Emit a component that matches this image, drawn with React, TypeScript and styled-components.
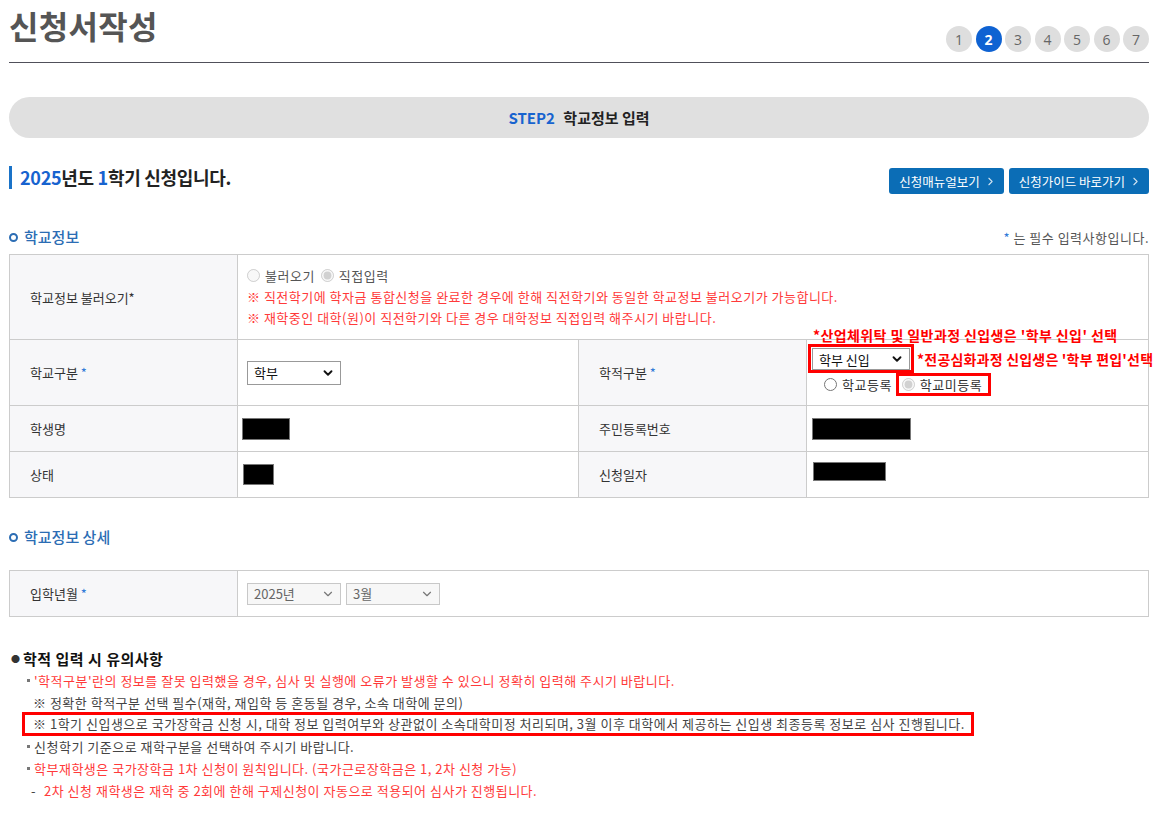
import styled, { createGlobalStyle } from "styled-components";
import { ChevronDown, ChevronRight } from "lucide-react";

const GlobalStyle = createGlobalStyle`
  body {
    margin: 0;
    background: #fff;
    font-family: "Noto Sans CJK KR", "Noto Sans", sans-serif;
    color: #333;
  }
`;

const STEPS = [1, 2, 3, 4, 5, 6, 7];

export default function App() {
  return (
    <>
      <GlobalStyle />
      <Page>
        <Header>
          <PageTitle>신청서작성</PageTitle>
          <Steps>
            {STEPS.map((n) => (
              <StepDot key={n} $active={n === 2}>
                {n}
              </StepDot>
            ))}
          </Steps>
        </Header>

        <StepBar>
          <Blue>STEP2</Blue> 학교정보 입력
        </StepBar>

        <YearRow>
          <YearTitle>
            <Blue>2025</Blue>년도 <Blue>1</Blue>학기 신청입니다.
          </YearTitle>
          <ButtonGroup>
            <LinkButton>
              신청매뉴얼보기 <ChevronRight size={13} strokeWidth={2} />
            </LinkButton>
            <LinkButton>
              신청가이드 바로가기 <ChevronRight size={13} strokeWidth={2} />
            </LinkButton>
          </ButtonGroup>
        </YearRow>

        <SectionHead>
          <SectionTitle>
            <Ring />
            학교정보
          </SectionTitle>
          <RequiredNote>
            <Star>*</Star> 는 필수 입력사항입니다.
          </RequiredNote>
        </SectionHead>

        <InfoTable>
          <colgroup>
            <col style={{ width: 228 }} />
            <col style={{ width: 341 }} />
            <col style={{ width: 228 }} />
            <col />
          </colgroup>
          <tbody>
            <Row $h={85}>
              <Label>학교정보 불러오기*</Label>
              <Value colSpan={3} $top>
                <Line>
                  <RadioLabel>
                    <input type="radio" name="load" disabled /> 불러오기
                  </RadioLabel>
                  <RadioLabel>
                    <input type="radio" name="load" disabled defaultChecked /> 직접입력
                  </RadioLabel>
                </Line>
                <Line $red>※ 직전학기에 학자금 통합신청을 완료한 경우에 한해 직전학기와 동일한 학교정보 불러오기가 가능합니다.</Line>
                <Line $red>※ 재학중인 대학(원)이 직전학기와 다른 경우 대학정보 직접입력 해주시기 바랍니다.</Line>
              </Value>
            </Row>
            <Row $h={66}>
              <Label>
                학교구분 <Star>*</Star>
              </Label>
              <Value>
                <Select $w={94}>
                  <select defaultValue="학부">
                    <option>학부</option>
                  </select>
                  <ChevronDown size={14} strokeWidth={3.2} />
                </Select>
              </Value>
              <Label>
                학적구분 <Star>*</Star>
              </Label>
              <Value $top $tight>
                <Callout>*산업체위탁 및 일반과정 신입생은 '학부 신입' 선택</Callout>
                <MarkRow>
                  <RedBox $pad="1px 1px 0">
                    <Select $w={98} $h={22}>
                      <select defaultValue="학부 신입">
                        <option>학부 신입</option>
                      </select>
                      <ChevronDown size={14} strokeWidth={3.2} />
                    </Select>
                  </RedBox>
                  <Annotation>*전공심화과정 신입생은 '학부 편입'선택</Annotation>
                </MarkRow>
                <RadioRow>
                  <RadioLabel $dark>
                    <input type="radio" name="reg" /> 학교등록
                  </RadioLabel>
                  <RedBox $pad="0 6px 0 3px" $h={17}>
                    <RadioLabel $dark>
                      <input type="radio" name="reg" disabled defaultChecked /> 학교미등록
                    </RadioLabel>
                  </RedBox>
                </RadioRow>
              </Value>
            </Row>
            <Row $h={46}>
              <Label>학생명</Label>
              <Value $tight>
                <Redact $w={48} $h={22} $x={3} />
              </Value>
              <Label>주민등록번호</Label>
              <Value $tight>
                <Redact $w={99} $h={22} $x={4} />
              </Value>
            </Row>
            <Row $h={46}>
              <Label>상태</Label>
              <Value $tight>
                <Redact $w={31} $h={21} $x={4} />
              </Value>
              <Label>신청일자</Label>
              <Value $tight>
                <Redact $w={73} $h={19} $x={5} $y={-6} />
              </Value>
            </Row>
          </tbody>
        </InfoTable>

        <SectionHead $gap={29}>
          <SectionTitle>
            <Ring />
            학교정보 상세
          </SectionTitle>
        </SectionHead>

        <InfoTable $mt={23}>
          <colgroup>
            <col style={{ width: 228 }} />
            <col />
          </colgroup>
          <tbody>
            <Row $h={46}>
              <Label>
                입학년월 <Star>*</Star>
              </Label>
              <Value>
                <SelectGroup>
                  <Select $w={94} $h={22} $muted>
                    <select defaultValue="2025년" disabled>
                      <option>2025년</option>
                    </select>
                    <ChevronDown size={14} strokeWidth={2} />
                  </Select>
                  <Select $w={94} $h={22} $muted>
                    <select defaultValue="3월" disabled>
                      <option>3월</option>
                    </select>
                    <ChevronDown size={14} strokeWidth={2} />
                  </Select>
                </SelectGroup>
              </Value>
            </Row>
          </tbody>
        </InfoTable>

        <Notes>
          <NotesTitle>
            <Dot>●</Dot>학적 입력 시 유의사항
          </NotesTitle>
          <NoteItem>
            <Square />
            <RedText>'학적구분'란의 정보를 잘못 입력했을 경우, 심사 및 실행에 오류가 발생할 수 있으니 정확히 입력해 주시기 바랍니다.</RedText>
          </NoteItem>
          <NoteItem $indent>※ 정확한 학적구분 선택 필수(재학, 재입학 등 혼동될 경우, 소속 대학에 문의)</NoteItem>
          <BoxedNote>
            ※ 1학기 신입생으로 국가장학금 신청 시, 대학 정보 입력여부와 상관없이 소속대학미정 처리되며, 3월 이후 대학에서 제공하는 신입생 최종등록 정보로 심사 진행됩니다.
          </BoxedNote>
          <NoteItem>
            <Square />
            신청학기 기준으로 재학구분을 선택하여 주시기 바랍니다.
          </NoteItem>
          <NoteItem>
            <Square />
            <RedText>학부재학생은 국가장학금 1차 신청이 원칙입니다. (국가근로장학금은 1, 2차 신청 가능)</RedText>
          </NoteItem>
          <NoteItem $dash>
            <DashMark>-</DashMark>
            <RedText>2차 신청 재학생은 재학 중 2회에 한해 구제신청이 자동으로 적용되어 심사가 진행됩니다.</RedText>
          </NoteItem>
        </Notes>
      </Page>
    </>
  );
}

const Page = styled.div`
  width: 1140px;
  padding: 0 0 20px 9px;
`;

const Header = styled.header`
  display: flex;
  justify-content: space-between;
  align-items: flex-start;
  height: 63px;
  box-sizing: border-box;
  border-bottom: 1px solid #50505a;
  padding-top: 5px;
`;

const PageTitle = styled.h1`
  margin: 0;
  font-size: 32px;
  line-height: 40px;
  font-weight: 700;
  color: #555;
  letter-spacing: 0.3px;
`;

const Steps = styled.ol`
  display: flex;
  gap: 3.5px;
  margin: 21px 0 0;
  padding: 0;
  list-style: none;
`;

const StepDot = styled.li<{ $active?: boolean }>`
  width: 26px;
  height: 26px;
  border-radius: 50%;
  display: flex;
  align-items: center;
  justify-content: center;
  font-family: "Open Sans", sans-serif;
  font-size: 14px;
  font-weight: ${(p) => (p.$active ? 700 : 400)};
  background: ${(p) => (p.$active ? "#0e62d2" : "#dedede")};
  color: ${(p) => (p.$active ? "#fff" : "#666")};
`;

const Blue = styled.span`
  color: #1763cf;
`;

const StepBar = styled.div`
  margin-top: 34px;
  height: 41px;
  border-radius: 21px;
  background: #e0e0e0;
  display: flex;
  align-items: center;
  justify-content: center;
  gap: 5px;
  font-size: 15px;
  font-weight: 700;
  color: #222;
  white-space: pre;
`;

const YearRow = styled.div`
  margin-top: 28px;
  display: flex;
  justify-content: space-between;
  align-items: flex-start;
`;

const YearTitle = styled.h2`
  margin: 0;
  border-left: 3px solid #1a73c8;
  padding-left: 8px;
  height: 23px;
  line-height: 23px;
  font-size: 18px;
  font-weight: 700;
  color: #222;
  letter-spacing: -0.3px;
`;

const ButtonGroup = styled.div`
  display: flex;
  gap: 5px;
  margin-top: 2px;
`;

const LinkButton = styled.button`
  height: 26px;
  padding: 0 7px 0 10px;
  display: inline-flex;
  align-items: center;
  gap: 4px;
  border: none;
  border-radius: 3px;
  background: #0b6db6;
  color: #fff;
  font-family: inherit;
  font-size: 12.5px;
  cursor: pointer;
  svg {
    opacity: 0.8;
  }
`;

const SectionHead = styled.div<{ $gap?: number }>`
  margin-top: ${(p) => p.$gap ?? 33}px;
  display: flex;
  justify-content: space-between;
  align-items: flex-end;
  height: 20px;
`;

const SectionTitle = styled.h3`
  margin: 0;
  display: flex;
  align-items: center;
  gap: 6px;
  font-size: 15px;
  font-weight: 500;
  color: #2c6db4;
  line-height: 20px;
`;

const Ring = styled.span`
  width: 5px;
  height: 5px;
  border: 2.5px solid #2c6db4;
  border-radius: 50%;
`;

const RequiredNote = styled.span`
  font-size: 13px;
  letter-spacing: 0.5px;
  color: #555;
  line-height: 18px;
`;

const Star = styled.span`
  color: #2f7ad8;
`;

const InfoTable = styled.table<{ $mt?: number }>`
  margin-top: ${(p) => p.$mt ?? 7}px;
  width: 1140px;
  border-collapse: collapse;
  table-layout: fixed;
  border: 1px solid #ccc;
`;

const Row = styled.tr<{ $h: number }>`
  height: ${(p) => p.$h}px;
`;

const Label = styled.th`
  background: #f7f7f9;
  border: 1px solid #ccc;
  text-align: left;
  padding: 0 0 0 20px;
  font-size: 13px;
  font-weight: 400;
  color: #333;
`;

const Value = styled.td<{ $top?: boolean; $tight?: boolean }>`
  position: relative;
  border: 1px solid #ccc;
  vertical-align: ${(p) => (p.$top ? "top" : "middle")};
  padding: ${(p) => (p.$tight ? (p.$top ? "4px 1px 0" : "0 1px") : p.$top ? "10px 9px 0" : "0 9px")};
  font-size: 13px;
  letter-spacing: 0.5px;
`;

const Line = styled.div<{ $red?: boolean }>`
  display: flex;
  align-items: center;
  gap: 6px;
  height: 21px;
  color: ${(p) => (p.$red ? "#ff3a3a" : "#555")};
`;

const RadioLabel = styled.label<{ $dark?: boolean }>`
  display: inline-flex;
  align-items: center;
  gap: 3px;
  font-size: 13px;
  letter-spacing: 0.5px;
  color: ${(p) => (p.$dark ? "#333" : "#555")};
  input {
    margin: 0 2px 0 0;
    width: 13px;
    height: 13px;
  }
`;

const Select = styled.span<{ $w: number; $h?: number; $muted?: boolean }>`
  position: relative;
  display: inline-block;
  width: ${(p) => p.$w}px;
  height: ${(p) => p.$h ?? 24}px;
  letter-spacing: 0;
  select {
    appearance: none;
    width: 100%;
    height: 100%;
    box-sizing: border-box;
    border: 1px solid ${(p) => (p.$muted ? "#c8c8c8" : "#999")};
    border-radius: 0;
    background: ${(p) => (p.$muted ? "#f7f7f7" : "#fff")};
    color: ${(p) => (p.$muted ? "#666" : "#111")};
    font-family: inherit;
    font-size: 13px;
    padding: 0 0 0 6px;
    opacity: 1;
  }
  svg {
    position: absolute;
    right: 6px;
    top: 50%;
    transform: translateY(-50%);
    color: ${(p) => (p.$muted ? "#777" : "#111")};
    pointer-events: none;
  }
`;

const SelectGroup = styled.div`
  display: flex;
  gap: 5px;
`;

const Callout = styled.div`
  position: absolute;
  left: 6px;
  top: -15px;
  white-space: nowrap;
  font-size: 14px;
  font-weight: 700;
  letter-spacing: 0.4px;
  color: #f00;
`;

const MarkRow = styled.div`
  display: flex;
  align-items: center;
  gap: 3px;
  white-space: nowrap;
`;

const RedBox = styled.span<{ $pad?: string; $h?: number }>`
  display: inline-flex;
  align-items: center;
  border: 3px solid #f00;
  padding: ${(p) => p.$pad ?? "1px"};
  height: ${(p) => (p.$h ? `${p.$h}px` : "auto")};
`;

const Annotation = styled.span`
  font-size: 14px;
  font-weight: 700;
  letter-spacing: 0.2px;
  color: #f00;
`;

const RadioRow = styled.div`
  display: flex;
  align-items: center;
  gap: 4px;
  padding-left: 16px;
`;

const Redact = styled.span<{ $w: number; $h: number; $x: number; $y?: number }>`
  display: block;
  width: ${(p) => p.$w}px;
  height: ${(p) => p.$h}px;
  margin-left: ${(p) => p.$x}px;
  margin-top: ${(p) => p.$y ?? 0}px;
  background: #000;
  border: 1px solid #777;
  box-sizing: border-box;
`;

const Notes = styled.div`
  margin-top: 30px;
  font-size: 13px;
  letter-spacing: 0.5px;
  color: #444;
`;

const NotesTitle = styled.div`
  display: flex;
  align-items: center;
  font-size: 15px;
  font-weight: 700;
  letter-spacing: 0.5px;
  color: #111;
  height: 22px;
  padding-left: 2px;
`;

const Dot = styled.span`
  font-size: 9px;
  width: 12px;
  color: #333;
`;

const NoteItem = styled.div<{ $indent?: boolean; $dash?: boolean }>`
  display: flex;
  align-items: center;
  height: 22px;
  white-space: pre;
  padding-left: ${(p) => (p.$indent ? 24 : p.$dash ? 22 : 18)}px;
`;

const Square = styled.span`
  width: 3px;
  height: 3px;
  background: #777;
  margin-right: 4px;
`;

const DashMark = styled.span`
  width: 13px;
  color: #444;
`;

const RedText = styled.span`
  color: #ff3a3a;
`;

const BoxedNote = styled.div`
  display: inline-block;
  margin: -1px 0 -1px 13px;
  border: 3px solid #f00;
  padding: 0 6px 0 8px;
  line-height: 18px;
  height: 18px;
  white-space: nowrap;
`;
